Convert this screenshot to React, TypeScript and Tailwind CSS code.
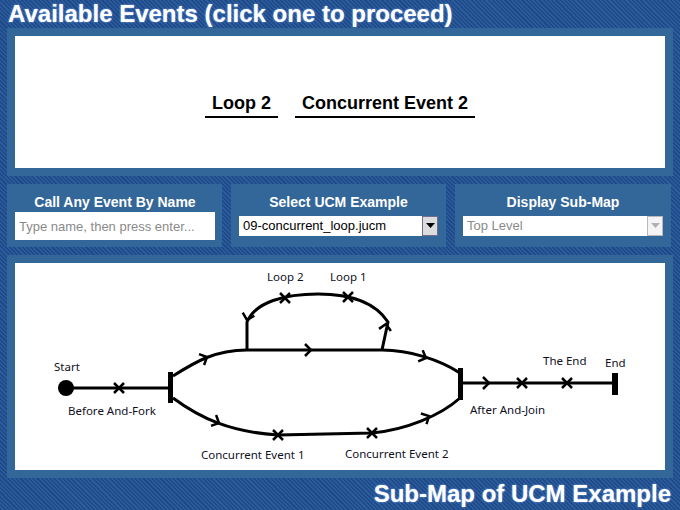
import React from 'react';

const LABEL = { fontFamily: '"Noto Sans", "Open Sans", sans-serif', fontSize: 11.5, fill: '#10101e' };

function Cross({ x, y }: { x: number; y: number }) {
  return (
    <g stroke="#000" strokeWidth={2.5}>
      <line x1={x - 5} y1={y - 5} x2={x + 5} y2={y + 5} />
      <line x1={x - 5} y1={y + 5} x2={x + 5} y2={y - 5} />
    </g>
  );
}

function Arrow({ x, y, a }: { x: number; y: number; a: number }) {
  return (
    <polyline
      points="-6,-6 0,0 -6,6"
      transform={`translate(${x} ${y}) rotate(${a})`}
      fill="none"
      stroke="#000"
      strokeWidth={2.5}
    />
  );
}

function Diagram() {
  return (
    <svg width="648" height="207" viewBox="15 263 648 207" className="block">
      <g fill="none" stroke="#000" strokeWidth={3}>
        <line x1={72} y1={388} x2={170} y2={388} />
        <path d="M173 376 C195 362 215 350 247 350 L382 350 C410 350 440 360 460 373" />
        <path d="M382 350 L388 322 C375 302 350 294 318 294 C285 294 255 302 247 322 L247 350" />
        <path d="M173 398 C200 418 230 432 278 435 L372 433 C405 430 440 416 460 398" />
        <line x1={463} y1={383} x2={614} y2={383} />
      </g>
      <circle cx={66} cy={388} r={8} fill="#000" />
      <rect x={168} y={372} width={5} height={31} fill="#000" />
      <rect x={458} y={368} width={5} height={32} fill="#000" />
      <rect x={612} y={373} width={6} height={22} fill="#000" />
      <Cross x={119} y={388} />
      <Cross x={285} y={298} />
      <Cross x={348} y={297} />
      <Cross x={278} y={435} />
      <Cross x={372} y={433} />
      <Cross x={522} y={383} />
      <Cross x={567} y={383} />
      <Arrow x={207} y={357} a={-25} />
      <Arrow x={311} y={350} a={0} />
      <Arrow x={426} y={358} a={22} />
      <Arrow x={386} y={324} a={-80} />
      <Arrow x={247} y={320} a={105} />
      <Arrow x={219} y={423} a={25} />
      <Arrow x={429} y={416} a={-28} />
      <Arrow x={489} y={383} a={0} />
      <text x={54} y={371} style={LABEL}>Start</text>
      <text x={68} y={415} style={LABEL}>Before And-Fork</text>
      <text x={267} y={281} style={LABEL}>Loop 2</text>
      <text x={330} y={281} style={LABEL}>Loop 1</text>
      <text x={201} y={459} style={LABEL}>Concurrent Event 1</text>
      <text x={345} y={458} style={LABEL}>Concurrent Event 2</text>
      <text x={470} y={414} style={LABEL}>After And-Join</text>
      <text x={543} y={365} style={LABEL}>The End</text>
      <text x={605} y={367} style={LABEL}>End</text>
    </svg>
  );
}

function DropArrow({ disabled }: { disabled?: boolean }) {
  return (
    <div
      className={
        disabled
          ? 'w-[16px] h-full border border-[#b8b8c0] bg-[#f4f4f4] flex items-center justify-center'
          : 'w-[16px] h-full border border-[#6e6e90] bg-[#dcdcdc] flex items-center justify-center'
      }
    >
      <svg width="9" height="6" viewBox="0 0 9 6">
        <path d="M0 0 L9 0 L4.5 5 Z" fill={disabled ? '#b0b0b0' : '#000'} />
      </svg>
    </div>
  );
}

export default function App() {
  const sans = { fontFamily: '"Liberation Sans", Arial, sans-serif' };
  const panel = 'bg-[#336699]';
  return (
    <div
      className="w-[680px] h-[510px] px-[7px] bg-[repeating-linear-gradient(45deg,#1e4a88_0px,#1e4a88_1.5px,#2b5b9c_1.5px,#2b5b9c_3px)] flex flex-col"
      style={sans}
    >
      <div className="h-[28px] pl-[1px] text-[24px] leading-[28px] font-bold text-white [text-shadow:0_0_2px_#8fb8ff]">
        Available Events (click one to proceed)
      </div>

      <div className={`${panel} h-[148px] p-[8px]`}>
        <div className="bg-white h-full flex justify-center items-start pt-[56px] gap-[17px]">
          <button className="px-[7px] pb-[2px] border-b-2 border-black text-[18px] leading-[22px] font-bold text-black">
            Loop 2
          </button>
          <button className="px-[7px] pb-[2px] border-b-2 border-black text-[18px] leading-[22px] font-bold text-black">
            Concurrent Event 2
          </button>
        </div>
      </div>

      <div className="mt-[8px] h-[63px] grid grid-cols-[215px_215px_216px] gap-[9px]">
        <div className={`${panel} pl-[8px] pr-[7px]`}>
          <div className="h-[28px] pt-[10px] text-[14px] leading-[16px] font-bold text-white text-center">
            Call Any Event By Name
          </div>
          <input
            className="w-[200px] h-[28px] bg-white px-[4px] text-[13px] text-black placeholder:text-[#8a8a8a] outline-none"
            placeholder="Type name, then press enter..."
          />
        </div>
        <div className={`${panel} pl-[8px] pr-[8px]`}>
          <div className="h-[28px] pt-[10px] text-[14px] leading-[16px] font-bold text-white text-center">
            Select UCM Example
          </div>
          <div className="mt-[4px] w-[199px] h-[20px] bg-white flex items-center">
            <span className="flex-1 pl-[4px] text-[13px] leading-[20px] text-black">09-concurrent_loop.jucm</span>
            <DropArrow />
          </div>
        </div>
        <div className={`${panel} pl-[8px] pr-[8px]`}>
          <div className="h-[28px] pt-[10px] text-[14px] leading-[16px] font-bold text-white text-center">
            Display Sub-Map
          </div>
          <div className="mt-[4px] w-[200px] h-[20px] bg-white flex items-center">
            <span className="flex-1 pl-[4px] text-[13px] leading-[20px] text-[#8a8a8a]">Top Level</span>
            <DropArrow disabled />
          </div>
        </div>
      </div>

      <div className={`${panel} mt-[8px] h-[223px] p-[8px]`}>
        <div className="bg-white h-full">
          <Diagram />
        </div>
      </div>

      <div className="h-[32px] pr-[2px] text-right text-[24px] leading-[32px] font-bold text-white [text-shadow:0_0_2px_#8fb8ff]">
        Sub-Map of UCM Example
      </div>
    </div>
  );
}
